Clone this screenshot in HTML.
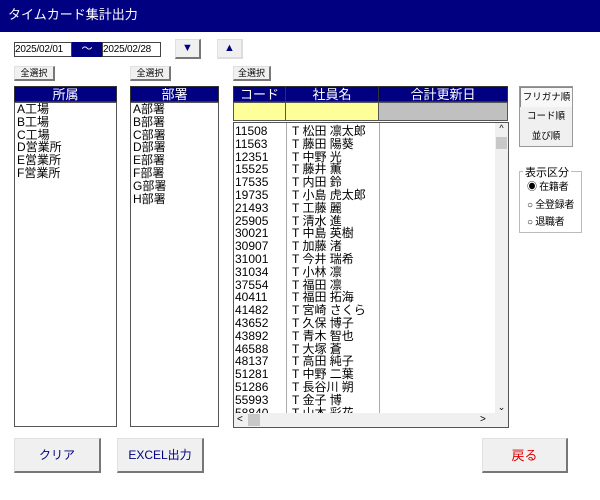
<html><head><style>
body{margin:0;width:600px;height:500px;background:#fff;font-family:"Liberation Sans","Noto Sans CJK JP",sans-serif;position:relative;overflow:hidden}
.a{position:absolute;box-sizing:border-box}
.title{left:0;top:0;width:600px;height:32px;background:#000080;color:#fff;font-size:13px;line-height:30px;padding-left:8px}
.btn{background:#f0f0f0;border:1px solid #e0e0e0;border-right:2px solid #777;border-bottom:2px solid #777;text-align:center;font-size:9px}
.hd{background:#000080;color:#fff;text-align:center;font-size:13px;line-height:15px;border:1px solid #333}
.lst{border:1px solid #555;background:#fff;font-size:12px;line-height:12.8px;padding-left:2px;overflow:hidden}
.row{font-size:12px;line-height:12.8px;white-space:nowrap}
.dt{font-size:10px;line-height:13px;border:1px solid #444;letter-spacing:-0.2px;white-space:nowrap;overflow:hidden}
</style></head><body>
<div class="a title">タイムカード集計出力</div>
<div class="a dt" style="left:14px;top:42px;width:58px;height:15px">2025/02/01</div>
<div class="a" style="left:72px;top:42px;width:30px;height:15px;background:#000080;color:#fff;text-align:center;font-size:11px;line-height:14px">～</div>
<div class="a dt" style="left:102px;top:42px;width:59px;height:15px">2025/02/28</div>
<div class="a btn" style="left:175px;top:39px;width:26px;height:20px;color:#000080;font-size:11px;line-height:17px">▼</div>
<div class="a btn" style="left:217px;top:39px;width:26px;height:20px;color:#000080;font-size:11px;line-height:17px;border-right-color:#ddd;border-bottom-color:#ddd">▲</div>
<div class="a btn" style="left:14px;top:66px;width:41px;height:15px;line-height:12px">全選択</div>
<div class="a btn" style="left:130px;top:66px;width:41px;height:15px;line-height:12px">全選択</div>
<div class="a btn" style="left:233px;top:66px;width:38px;height:15px;line-height:12px">全選択</div>
<div class="a hd" style="left:14px;top:86px;width:103px;height:16px">所属</div>
<div class="a lst" style="left:14px;top:102px;width:103px;height:325px">A工場<br>B工場<br>C工場<br>D営業所<br>E営業所<br>F営業所</div>
<div class="a hd" style="left:130px;top:86px;width:89px;height:16px">部署</div>
<div class="a lst" style="left:130px;top:102px;width:89px;height:325px">A部署<br>B部署<br>C部署<br>D部署<br>E部署<br>F部署<br>G部署<br>H部署</div>
<div class="a hd" style="left:233px;top:86px;width:53px;height:16px">コード</div>
<div class="a hd" style="left:285px;top:86px;width:94px;height:16px">社員名</div>
<div class="a hd" style="left:378px;top:86px;width:130px;height:16px">合計更新日</div>
<div class="a" style="left:233px;top:102px;width:53px;height:19px;background:#ffff99;border:1px solid #555"></div>
<div class="a" style="left:285px;top:102px;width:94px;height:19px;background:#ffff99;border:1px solid #555"></div>
<div class="a" style="left:378px;top:102px;width:130px;height:19px;background:#c0c0c0;border:1px solid #555"></div>
<div class="a" style="left:233px;top:122px;width:276px;height:306px;border:1px solid #555;overflow:hidden">
<div class="a" style="left:52px;top:0;width:1px;height:290px;background:#aaa"></div>
<div class="a" style="left:145px;top:0;width:1px;height:290px;background:#aaa"></div>
<div class="a row" style="left:1px;top:2px">11508<br>11563<br>12351<br>15525<br>17535<br>19735<br>21493<br>25905<br>30021<br>30907<br>31001<br>31034<br>37554<br>40411<br>41482<br>43652<br>43892<br>46588<br>48137<br>51281<br>51286<br>55993<br>58840</div>
<div class="a row" style="left:58px;top:2px">T 松田 凛太郎<br>T 藤田 陽葵<br>T 中野 光<br>T 藤井 薫<br>T 内田 鈴<br>T 小島 虎太郎<br>T 工藤 麗<br>T 清水 進<br>T 中島 英樹<br>T 加藤 渚<br>T 今井 瑞希<br>T 小林 凛<br>T 福田 凛<br>T 福田 拓海<br>T 宮崎 さくら<br>T 久保 博子<br>T 青木 智也<br>T 大塚 蒼<br>T 高田 純子<br>T 中野 二葉<br>T 長谷川 朔<br>T 金子 博<br>T 山本 彩花</div>
<div class="a" style="left:261px;top:0;width:13px;height:290px;background:#f0f0f0;font-size:9px;text-align:center">^<div style="position:absolute;left:1px;top:14px;width:11px;height:12px;background:#c8c8c8"></div><div style="position:absolute;bottom:0;width:13px">⌄</div></div>
<div class="a" style="left:0;top:290px;width:274px;height:14px;background:#f0f0f0;font-size:10px;line-height:14px;padding-left:3px">&lt;<div style="position:absolute;left:14px;top:1px;width:12px;height:12px;background:#c8c8c8"></div><span style="position:absolute;left:246px">&gt;</span></div>
</div>
<div class="a" style="left:519px;top:86px;width:54px;height:61px;border:1px solid #999;background:#f0f0f0"></div>
<div class="a" style="left:520px;top:87px;width:52px;height:20px;background:#f8f8f8;font-size:9.5px;line-height:19px;text-align:center;border-left:1px solid #888;border-top:1px solid #888">フリガナ順</div>
<div class="a" style="left:521px;top:107px;width:50px;height:20px;font-size:9.5px;line-height:19px;text-align:center">コード順</div>
<div class="a" style="left:521px;top:127px;width:50px;height:19px;font-size:9.5px;line-height:19px;text-align:center">並び順</div>
<div class="a" style="left:519px;top:171px;width:63px;height:62px;border:1px solid #bbb"></div>
<div class="a" style="left:523px;top:164px;background:#fff;font-size:11px;padding:0 2px">表示区分</div>
<div class="a" style="left:527px;top:179px;font-size:10px;line-height:17.5px;letter-spacing:-0.3px;white-space:nowrap">◉ 在籍者<br>○ 全登録者<br>○ 退職者</div>
<div class="a btn" style="left:14px;top:438px;width:87px;height:35px;color:#000080;font-size:12px;line-height:33px">クリア</div>
<div class="a btn" style="left:117px;top:438px;width:87px;height:35px;color:#000080;font-size:12px;line-height:33px">EXCEL出力</div>
<div class="a btn" style="left:482px;top:438px;width:86px;height:35px;color:#e00000;font-size:13px;line-height:33px">戻る</div>
</body></html>
